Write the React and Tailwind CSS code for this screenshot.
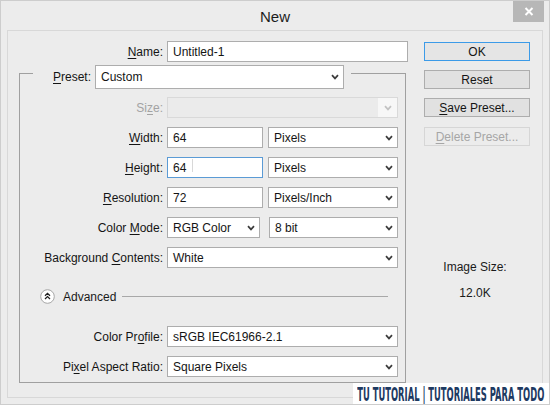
import React from 'react';

const font = { fontFamily: '"Liberation Sans", Arial, sans-serif' };

const Chevron = ({ disabled }) => (
  <svg width="8" height="6" viewBox="0 0 8 6" className="shrink-0">
    <path d="M1 1.2 L4 4.4 L7 1.2" fill="none" stroke={disabled ? '#c2c2c2' : '#3c3c3c'} strokeWidth="1.7" />
  </svg>
);

const Select = ({ value, width, height = 'h-[21px]' }) => (
  <div className={`${width} ${height} bg-white border border-[#adadad] flex items-center justify-between pl-[5px] pr-[4px]`}>
    <span>{value}</span>
    <Chevron />
  </div>
);

const TextField = ({ value, width, focused, caret }) => (
  <div
    className={`${width} h-[21px] bg-white border ${focused ? 'border-[#5b9bd5]' : 'border-[#adadad]'} flex items-center pl-[5px] relative`}
  >
    <span>{value}</span>
    {caret && <span className="absolute left-[24px] top-[1px] w-px h-[13px] bg-[#d8d8d8]" />}
  </div>
);

const U = ({ children }) => <span className="underline underline-offset-[2px]">{children}</span>;

const Row = ({ label, children, dim }) => (
  <div className="flex items-center h-[21px]">
    <div className={`w-[143px] text-right ${dim ? 'text-[#a3a3a3]' : ''}`}>{label}</div>
    <div className="ml-[4px] flex items-center">{children}</div>
  </div>
);

const Button = ({ children, primary, disabled, className = '' }) => (
  <div
    className={`w-[106px] h-[19px] flex items-center justify-center border ${
      primary
        ? 'border-[#3c9be8] bg-[#e5e5e5]'
        : disabled
        ? 'border-[#d6d6d6] bg-[#ececec] text-[#a6a6a6]'
        : 'border-[#adadad] bg-[#e1e1e1]'
    } ${className}`}
  >
    {children}
  </div>
);

export default function App() {
  return (
    <div
      className="w-[550px] h-[405px] bg-[#ececec] border border-[#cdcdcd] relative overflow-hidden text-[12px] text-[#141414] leading-none"
      style={font}
    >
      {/* title bar */}
      <div className="h-[29px] flex items-center justify-center relative">
        <span className="text-[15px] text-[#1c1c1c] mt-[2px]">New</span>
        <div className="absolute top-0 right-[5px] w-[31px] h-[21px] bg-[#b7b7b7] flex items-center justify-center">
          <svg width="10" height="9" viewBox="0 0 10 9">
            <path d="M1.5 1 L8.5 8 M8.5 1 L1.5 8" stroke="#ffffff" strokeWidth="2" />
          </svg>
        </div>
      </div>

      {/* body */}
      <div className="mx-[6px] h-[368px] border border-[#d8d8d8] flex">
        {/* left column */}
        <div className="w-[400px] pt-[10px]">
          <div className="flex items-center h-[21px]">
            <div className="w-[155px] text-right">
              <U>N</U>ame:
            </div>
            <div className="ml-[4px]">
              <TextField value="Untitled-1" width="w-[241px]" />
            </div>
          </div>

          {/* preset group */}
          <div className="ml-[11px] w-[387px] mt-[3px]">
            <div className="flex h-[24px]">
              <div className="w-[14px] h-[16px] mt-[8px] border-t border-l border-[#a0a0a0]" />
              <div className="flex items-center pl-[20px] pr-[7px] h-[24px]">
                <span>
                  <U>P</U>reset:
                </span>
                <div className="ml-[4px]">
                  <Select value="Custom" width="w-[249px]" height="h-[24px]" />
                </div>
              </div>
              <div className="flex-1 h-[16px] mt-[8px] border-t border-r border-[#a0a0a0]" />
            </div>
            <div className="border-l border-r border-b border-[#a0a0a0] h-[294px] pt-[8px] flex flex-col">
              <Row label={<>Si<U>z</U>e:</>} dim>
                <div className="w-[231px] h-[21px] border border-[#d9d9d9] bg-[#ebebeb] flex">
                  <div className="flex-1" />
                  <div className="w-[19px] bg-[#f7f7f7] flex items-center justify-center">
                    <Chevron disabled />
                  </div>
                </div>
              </Row>
              <div className="mt-[9px]">
                <Row label={<><U>W</U>idth:</>}>
                  <TextField value="64" width="w-[96px]" />
                  <div className="ml-[5px]">
                    <Select value="Pixels" width="w-[130px]" />
                  </div>
                </Row>
              </div>
              <div className="mt-[9px]">
                <Row label={<><U>H</U>eight:</>}>
                  <TextField value="64" width="w-[96px]" focused caret />
                  <div className="ml-[5px]">
                    <Select value="Pixels" width="w-[130px]" />
                  </div>
                </Row>
              </div>
              <div className="mt-[9px]">
                <Row label={<><U>R</U>esolution:</>}>
                  <TextField value="72" width="w-[96px]" />
                  <div className="ml-[5px]">
                    <Select value="Pixels/Inch" width="w-[130px]" />
                  </div>
                </Row>
              </div>
              <div className="mt-[9px]">
                <Row label={<>Color <U>M</U>ode:</>}>
                  <Select value="RGB Color" width="w-[93px]" />
                  <div className="ml-[9px]">
                    <Select value="8 bit" width="w-[129px]" />
                  </div>
                </Row>
              </div>
              <div className="mt-[9px]">
                <Row label={<>Background <U>C</U>ontents:</>}>
                  <Select value="White" width="w-[231px]" />
                </Row>
              </div>

              {/* advanced */}
              <div className="mt-[21px] ml-[20px] flex items-center h-[15px] pr-[17px]">
                <svg width="15" height="15" viewBox="0 0 15 15" className="shrink-0">
                  <circle cx="7.5" cy="7.5" r="6.8" fill="#ffffff" stroke="#a6a6a6" />
                  <path d="M5 6.8 L7.5 4.4 L10 6.8 M5 10 L7.5 7.6 L10 10" fill="none" stroke="#202020" strokeWidth="1.3" />
                </svg>
                <span className="ml-[8px] text-[#1a1a1a]">Advanced</span>
                <div className="flex-1 ml-[6px] border-t border-[#a8a8a8]" />
              </div>

              <div className="mt-[22px]">
                <Row label={<>Color Pr<U>o</U>file:</>}>
                  <Select value="sRGB IEC61966-2.1" width="w-[231px]" />
                </Row>
              </div>
              <div className="mt-[9px]">
                <Row label={<>Pi<U>x</U>el Aspect Ratio:</>}>
                  <Select value="Square Pixels" width="w-[231px]" />
                </Row>
              </div>
            </div>
          </div>
        </div>

        {/* right column */}
        <div className="flex-1 flex flex-col">
          <div className="pl-[16px] pt-[11px] flex flex-col">
            <Button primary>OK</Button>
            <Button className="mt-[9px]">Reset</Button>
            <Button className="mt-[9px]">
              <span>
                <U>S</U>ave Preset...
              </span>
            </Button>
            <Button disabled className="mt-[10px]">
              <span>
                <U>D</U>elete Preset...
              </span>
            </Button>
          </div>
          <div className="mt-[115px] flex flex-col items-center text-[#1a1a1a]">
            <span>Image Size:</span>
            <span className="mt-[14px]">12.0K</span>
          </div>
        </div>
      </div>

      {/* watermark */}
      <div className="absolute left-[352px] top-[382px] w-[196px] h-[23px] bg-white flex items-center justify-center overflow-hidden">
        <span
          className="block text-[19px] font-bold text-[#1d3a62] whitespace-nowrap scale-x-[0.49]"
          style={{ fontFamily: '"Liberation Sans Narrow", "DejaVu Sans Condensed", sans-serif' }}
        >
          TU TUTORIAL | TUTORIALES PARA TODO
        </span>
      </div>
    </div>
  );
}
